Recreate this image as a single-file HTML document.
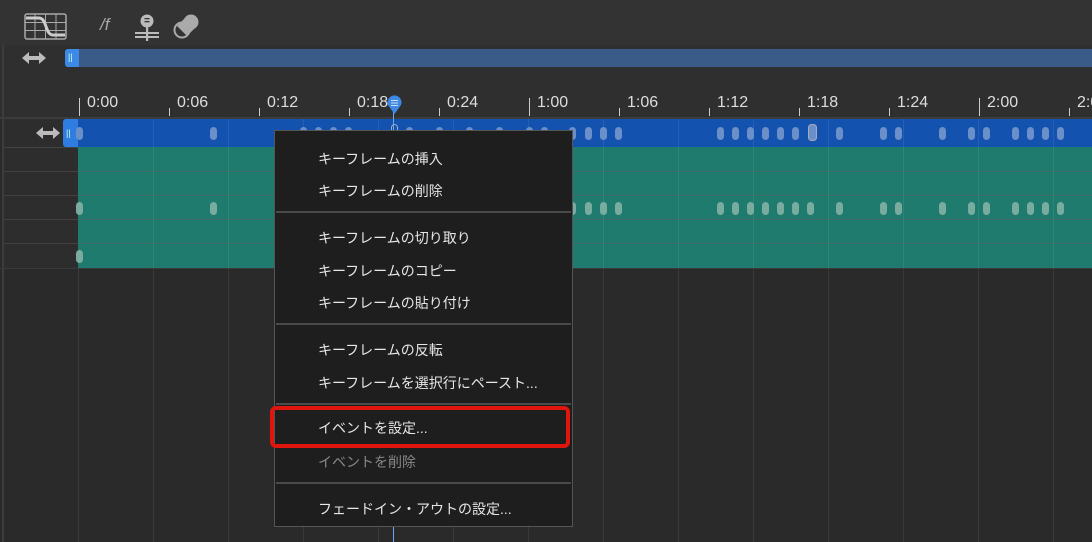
<!DOCTYPE html>
<html><head><meta charset="utf-8"><style>
*{margin:0;padding:0;box-sizing:border-box}
body{width:1092px;height:542px;overflow:hidden;background:#2a2a2a;position:relative;font-family:"Liberation Sans","Noto Sans CJK JP",sans-serif;color:#ddd}
.abs{position:absolute}
.pill{position:absolute;width:7px;height:13px;border-radius:3.5px}
.mi{position:absolute;left:43px;font-size:14px;color:#e6e6e6;white-space:nowrap}
.sep{position:absolute;left:1px;right:1px;height:2px;background:#4a4a4a}
.tl{position:absolute;top:94px;font-size:16px;color:#ddd}
</style></head><body>
<div class="abs" style="left:0;top:0;width:1092px;height:45px;background:#333"></div>
<div class="abs" style="left:0;top:45px;width:1092px;height:74px;background:#2f2f2f"></div>
<div class="abs" style="left:2px;top:45px;width:2px;height:497px;background:#3c3c3c"></div>
<!-- toolbar icons -->
<svg class="abs" style="left:24px;top:13px" width="43" height="27" viewBox="0 0 43 27" fill="none" stroke="#aaa">
<rect x="1" y="1" width="41" height="25" rx="2" stroke-width="1.5"/><path d="M1 9.5H42M1 17.5H42M11 1V26M21.5 1V26M32 1V26" stroke-width="1"/>
<path d="M2 5H15C23 5 21 22 29 22H41" stroke="#ccc" stroke-width="3"/></svg>
<div class="abs" style="left:100px;top:15px;font-size:17px;color:#aaa;font-style:italic">/f</div>
<svg class="abs" style="left:134px;top:13px" width="26" height="28" viewBox="0 0 26 28" fill="#bbb">
<circle cx="13" cy="8" r="6.5"/><rect x="12" y="13" width="2.2" height="15"/><rect x="1" y="19" width="24" height="2"/><rect x="1" y="23" width="24" height="2"/>
<rect x="10.5" y="5" width="5" height="1.3" fill="#333"/><rect x="10.5" y="8" width="5" height="1.3" fill="#333"/></svg>
<svg class="abs" style="left:172px;top:13px" width="28" height="26" viewBox="0 0 28 26">
<circle cx="10" cy="17" r="7.5" fill="none" stroke="#aaa" stroke-width="2"/><path d="M5 13L14 4L24 14L15 23Z" fill="#aaa"/><circle cx="19" cy="9" r="7.5" fill="#aaa"/></svg>
<!-- scrollbar -->
<svg class="abs" style="left:22px;top:52px" width="24" height="12" viewBox="0 0 24 12" fill="#bbb"><path d="M0 6L7 0V4H17V0L24 6L17 12V8H7V12Z"/></svg>
<div class="abs" style="left:65px;top:49px;width:1027px;height:18px;background:#3a5a88;border-radius:3px 0 0 3px"></div>
<div class="abs" style="left:65px;top:49px;width:14px;height:18px;background:#3d8ae6;border-radius:3px 0 0 3px;color:#cfe;font-size:9px;padding:3px 0 0 3px">||</div>
<!-- ruler -->
<div id="ruler"></div>
<div class="abs" style="left:0;top:117px;width:1092px;height:2px;background:#3c3c3c"></div>
<!-- left column -->
<div class="abs" style="left:4px;top:119px;width:74px;height:150px;background:#2d2d2d"></div>
<svg class="abs" style="left:36px;top:127px" width="24" height="12" viewBox="0 0 24 12" fill="#bbb"><path d="M0 6L7 0V4H17V0L24 6L17 12V8H7V12Z"/></svg>
<!-- grid below -->
<div id="grid"></div>
<!-- green area -->
<div class="abs" style="left:78px;top:147px;width:1014px;height:121px;background:#1f7b6e"></div>
<div id="rows"></div>
<!-- blue row -->
<div class="abs" style="left:63px;top:119px;width:1029px;height:28px;background:#1452b0;border-radius:3px 0 0 3px"></div>
<div id="bgrid"></div>
<div class="abs" style="left:63px;top:119px;width:15px;height:28px;background:#2f7de0;border-radius:3px 0 0 3px;color:#cfe;font-size:9px;padding:9px 0 0 3px">||</div>
<div id="pills"></div>
<!-- playhead -->
<div class="abs" style="left:393px;top:110px;width:1px;height:432px;background:#6aa8f0"></div>
<svg class="abs" style="left:386px;top:95px" width="17" height="20" viewBox="0 0 17 20"><path d="M8.5 19L2 10A7 7 0 1 1 15 10Z" fill="#3d8ae6"/><path d="M5 5.5H12M5 8H12M5 10.5H12" stroke="#cde" stroke-width="1"/></svg>
<!-- menu -->
<div class="abs" style="left:274px;top:130px;width:299px;height:397px;background:#1e1e1e;border:1px solid #555">
<div class="mi" style="top:18px">キーフレームの挿入</div>
<div class="mi" style="top:50px">キーフレームの削除</div>
<div class="sep" style="top:80px"></div>
<div class="mi" style="top:97px">キーフレームの切り取り</div>
<div class="mi" style="top:130px">キーフレームのコピー</div>
<div class="mi" style="top:162px">キーフレームの貼り付け</div>
<div class="sep" style="top:192px"></div>
<div class="mi" style="top:209px">キーフレームの反転</div>
<div class="mi" style="top:242px">キーフレームを選択行にペースト...</div>
<div class="sep" style="top:272px"></div>
<div class="mi" style="top:287px">イベントを設定...</div>
<div class="mi" style="top:321px;color:#888">イベントを削除</div>
<div class="sep" style="top:351px"></div>
<div class="mi" style="top:368px">フェードイン・アウトの設定...</div>
</div>
<div class="abs" style="left:270px;top:406px;width:300px;height:42px;border:4px solid #e0160e;border-radius:6px"></div>
<script>
var h='';
var labels=['0:00','0:06','0:12','0:18','0:24','1:00','1:06','1:12','1:18','1:24','2:00','2:0'];
for(var i=0;i<12;i++){var x=79+i*90;var tall=(i%5==0);
h+='<div class="abs" style="left:'+x+'px;top:'+(tall?98:108)+'px;width:1px;height:'+(tall?18:8)+'px;background:#ccc"></div>';
h+='<div class="tl" style="left:'+(x+8)+'px">'+labels[i]+'</div>';}
document.getElementById('ruler').innerHTML=h;
h='';
for(var x=78;x<1092;x+=75){h+='<div class="abs" style="left:'+x+'px;top:119px;width:1px;height:423px;background:#3a3a3a"></div>';}
document.getElementById('grid').innerHTML=h;
h='';
for(var x=153;x<1092;x+=75){h+='<div class="abs" style="left:'+x+'px;top:119px;width:1px;height:28px;background:rgba(255,255,255,.08)"></div>';}
document.getElementById('bgrid').innerHTML=h;
h='';
[171,195,219,243].forEach(function(y){h+='<div class="abs" style="left:4px;top:'+y+'px;width:1088px;height:1px;background:rgba(90,90,90,.45)"></div>';});
h+='<div class="abs" style="left:4px;top:147px;width:74px;height:1px;background:#444"></div><div class="abs" style="left:0;top:268px;width:1092px;height:1px;background:#3a3a3a"></div>';
for(var x=153;x<1092;x+=75){h+='<div class="abs" style="left:'+x+'px;top:147px;width:1px;height:121px;background:rgba(255,255,255,.08)"></div>';}
document.getElementById('rows').innerHTML=h;
h='';
var bp=[79,213,303,318,333,348,409,439,469,499,529,544,572,588,603,618,720,735,750,765,780,795,839,883,898,942,971,986,1015,1030,1045,1060];
bp.forEach(function(x){h+='<div class="pill" style="left:'+(x-3)+'px;top:127px;background:#6a8fc9"></div>';});
h+='<div class="pill" style="left:391px;top:124px;border:1.5px solid #aab;height:14px"></div>';
h+='<div class="pill" style="left:808px;top:124px;border:1.5px solid #aab;height:17px;width:9px;background:#6a8fc9"></div>';
var gp=[79,213,572,588,603,618,720,735,750,765,780,795,810,839,883,898,942,971,986,1015,1030,1045,1060];
gp.forEach(function(x){h+='<div class="pill" style="left:'+(x-3)+'px;top:202px;background:#79ab9f"></div>';});
h+='<div class="pill" style="left:76px;top:250px;background:#79ab9f"></div>';
document.getElementById('pills').innerHTML=h;
</script>
</body></html>
